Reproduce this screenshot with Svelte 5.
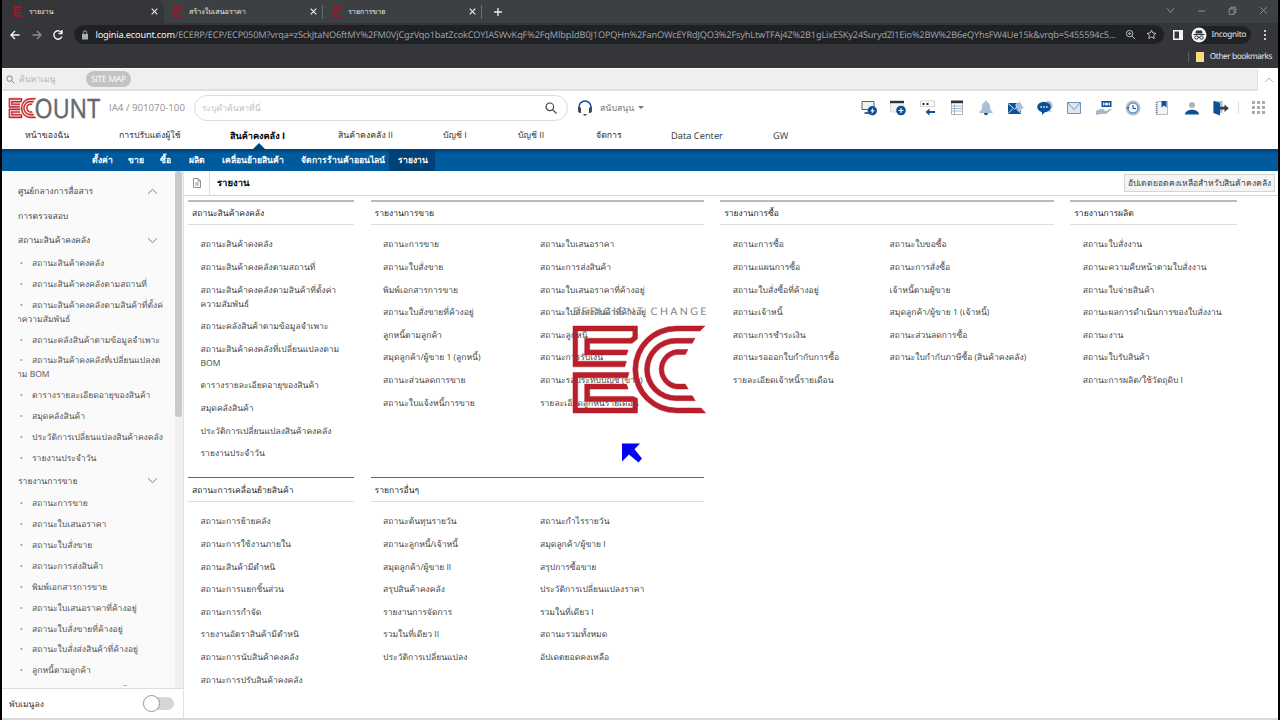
<script lang="ts">
  type Section = { title: string; open?: boolean; chevron?: boolean; items: string[] };
  type Group = { title: string; columns: string[][] };

  const tabs = ['รายงาน', 'สร้างใบเสนอราคา', 'รายการขาย'];

  const mainMenu = [
    'หน้าของฉัน',
    'การปรับแต่งผู้ใช้',
    'สินค้าคงคลัง I',
    'สินค้าคงคลัง II',
    'บัญชี I',
    'บัญชี II',
    'จัดการ',
    'Data Center',
    'GW'
  ];
  const subMenu = ['ตั้งค่า', 'ขาย', 'ซื้อ', 'ผลิต', 'เคลื่อนย้ายสินค้า', 'จัดการร้านค้าออนไลน์', 'รายงาน'];

  const icons = [
    'remote', 'window', 'input', 'list', 'bell', 'compose', 'chat',
    'mail', 'money', 'history', 'book', 'user', 'exit'
  ];

  const sections: Section[] = [
    { title: 'ศูนย์กลางการสื่อสาร', chevron: true, open: false, items: [] },
    { title: 'การตรวจสอบ', items: [] },
    {
      title: 'สถานะสินค้าคงคลัง',
      chevron: true,
      open: true,
      items: [
        'สถานะสินค้าคงคลัง',
        'สถานะสินค้าคงคลังตามสถานที่',
        'สถานะสินค้าคงคลังตามสินค้าที่ตั้งค่\nาความสัมพันธ์',
        'สถานะคลังสินค้าตามข้อมูลจำเพาะ',
        'สถานะสินค้าคงคลังที่เปลี่ยนแปลงต\nาม BOM',
        'ตารางรายละเอียดอายุของสินค้า',
        'สมุดคลังสินค้า',
        'ประวัติการเปลี่ยนแปลงสินค้าคงคลัง',
        'รายงานประจำวัน'
      ]
    },
    {
      title: 'รายงานการขาย',
      chevron: true,
      open: true,
      items: [
        'สถานะการขาย',
        'สถานะใบเสนอราคา',
        'สถานะใบสั่งขาย',
        'สถานะการส่งสินค้า',
        'พิมพ์เอกสารการขาย',
        'สถานะใบเสนอราคาที่ค้างอยู่',
        'สถานะใบสั่งขายที่ค้างอยู่',
        'สถานะใบสั่งส่งสินค้าที่ค้างอยู่',
        'ลูกหนี้ตามลูกค้า',
        'สมุดลูกค้า/ผู้ขาย 1 (ลูกหนี้)'
      ]
    }
  ];

  const topGroups: Group[] = [
    {
      title: 'สถานะสินค้าคงคลัง',
      columns: [[
        'สถานะสินค้าคงคลัง',
        'สถานะสินค้าคงคลังตามสถานที่',
        'สถานะสินค้าคงคลังตามสินค้าที่ตั้งค่า\nความสัมพันธ์',
        'สถานะคลังสินค้าตามข้อมูลจำเพาะ',
        'สถานะสินค้าคงคลังที่เปลี่ยนแปลงตาม\nBOM',
        'ตารางรายละเอียดอายุของสินค้า',
        'สมุดคลังสินค้า',
        'ประวัติการเปลี่ยนแปลงสินค้าคงคลัง',
        'รายงานประจำวัน'
      ]]
    },
    {
      title: 'รายงานการขาย',
      columns: [
        [
          'สถานะการขาย',
          'สถานะใบสั่งขาย',
          'พิมพ์เอกสารการขาย',
          'สถานะใบสั่งขายที่ค้างอยู่',
          'ลูกหนี้ตามลูกค้า',
          'สมุดลูกค้า/ผู้ขาย 1 (ลูกหนี้)',
          'สถานะส่วนลดการขาย',
          'สถานะใบแจ้งหนี้การขาย'
        ],
        [
          'สถานะใบเสนอราคา',
          'สถานะการส่งสินค้า',
          'สถานะใบเสนอราคาที่ค้างอยู่',
          'สถานะใบสั่งส่งสินค้าที่ค้างอยู่',
          'สถานะลูกหนี้',
          'สถานะการรับเงิน',
          'สถานะรอประทับบัญชี (ขาย)',
          'รายละเอียดลูกหนี้รายเดือน'
        ]
      ]
    },
    {
      title: 'รายงานการซื้อ',
      columns: [
        [
          'สถานะการซื้อ',
          'สถานะแผนการซื้อ',
          'สถานะใบสั่งซื้อที่ค้างอยู่',
          'สถานะเจ้าหนี้',
          'สถานะการชำระเงิน',
          'สถานะรอออกใบกำกับการซื้อ',
          'รายละเอียดเจ้าหนี้รายเดือน'
        ],
        [
          'สถานะใบขอซื้อ',
          'สถานะการสั่งซื้อ',
          'เจ้าหนี้ตามผู้ขาย',
          'สมุดลูกค้า/ผู้ขาย 1 (เจ้าหนี้)',
          'สถานะส่วนลดการซื้อ',
          'สถานะใบกำกับภาษีซื้อ (สินค้าคงคลัง)'
        ]
      ]
    },
    {
      title: 'รายงานการผลิต',
      columns: [[
        'สถานะใบสั่งงาน',
        'สถานะความคืบหน้าตามใบสั่งงาน',
        'สถานะใบจ่ายสินค้า',
        'สถานะผลการดำเนินการของใบสั่งงาน',
        'สถานะงาน',
        'สถานะใบรับสินค้า',
        'สถานะการผลิต/ใช้วัตถุดิบ I'
      ]]
    }
  ];

  const bottomGroups: Group[] = [
    {
      title: 'สถานะการเคลื่อนย้ายสินค้า',
      columns: [[
        'สถานะการย้ายคลัง',
        'สถานะการใช้งานภายใน',
        'สถานะสินค้ามีตำหนิ',
        'สถานะการแยกชิ้นส่วน',
        'สถานะการกำจัด',
        'รายงานอัตราสินค้ามีตำหนิ',
        'สถานะการนับสินค้าคงคลัง',
        'สถานะการปรับสินค้าคงคลัง'
      ]]
    },
    {
      title: 'รายการอื่นๆ',
      columns: [
        [
          'สถานะต้นทุนรายวัน',
          'สถานะลูกหนี้/เจ้าหนี้',
          'สมุดลูกค้า/ผู้ขาย II',
          'สรุปสินค้าคงคลัง',
          'รายงานการจัดการ',
          'รวมในที่เดียว II',
          'ประวัติการเปลี่ยนแปลง'
        ],
        [
          'สถานะกำไรรายวัน',
          'สมุดลูกค้า/ผู้ขาย I',
          'สรุปการซื้อขาย',
          'ประวัติการเปลี่ยนแปลงราคา',
          'รวมในที่เดียว I',
          'สถานะรวมทั้งหมด',
          'อัปเดตยอดคงเหลือ'
        ]
      ]
    }
  ];

  let activeSub = $state('รายงาน');
  let folded = $state(false);
</script>

{#snippet ecMark()}
  <path d="M0 0H193V39L177 52H50V72H165L160 87H35V37H172L179 31V15H14V106H160L155 123H0Z" />
  <path d="M0 140H168L163 156H14V247H179V227H35V175H160L165 190H50V212H180L193 218V262H0Z" />
  <path d="M395 0H310A131 131 0 0 0 310 262H397L383 247H310A116 116 0 0 1 310 15H380Z" />
  <path d="M365 37H308A94 94 0 0 0 308 225H366L357 210H308A79 79 0 0 1 308 52H357Z" />
  <path d="M344 71H310A60 60 0 0 0 310 190H345L336 175H310A45 45 0 0 1 310 86H336Z" />
{/snippet}

{#snippet toolIcon(name: string)}
  <svg class="tool" viewBox="0 0 16 16" width="16" height="16">
    {#if name === 'remote'}
      <path d="M1 1.500h12v8H1z" fill="#f2f2f2" stroke="#59636e" />
      <path d="M3.500 12h5v2h-5z" fill="#59636e" />
      <circle cx="11.300" cy="10.800" r="4.700" fill="#0a5297" />
      <path d="M12.300 7.500l-3 4h2l-1 2.800 3.500-4h-2z" fill="#fff" />
    {:else if name === 'window'}
      <path d="M.5 2h13v10H.5z" fill="#f2f2f2" stroke="#ddd" />
      <path d="M0 .8h14v2.400H0z" fill="#333" />
      <circle cx="11" cy="10.500" r="4.800" fill="#0a5297" />
      <path d="M11 8v5M8.500 10.500h5" stroke="#fff" stroke-width="1.200" />
    {:else if name === 'input'}
      <path d="M.5 1h14v5.500H.5z" fill="#fff" stroke="#d3d3d3" />
      <path d="M2.500 3h2v2h-2zM6.500 3h2v2h-2z" fill="#222" />
      <path d="M9.500 8.500L5.500 12l4 3.500v-2.500h5.500v-2H9.500z" fill="#0a5297" />
    {:else if name === 'list'}
      <path d="M2.500 1.500h11v13h-11z" fill="#fff" stroke="#aab3bb" />
      <path d="M2 .5h12v2.700H2z" fill="#333" />
      <path d="M5.500 3v11M3 6h10M3 8.500h10M3 11h10" stroke="#9bb7d0" />
    {:else if name === 'bell'}
      <path d="M8 .5c1 0 1 1 1 1.500 3 .8 3 3.500 3.200 6 .2 2 .8 2.500 2 3.500H1.800c1.200-1 1.800-1.500 2-3.500C4 5.500 4 2.800 7 2c0-.5 0-1.500 1-1.500z" fill="#a9c0d6" />
      <path d="M1.500 11.500h13v1.200h-13z" fill="#789dbf" />
      <path d="M6 13h4c0 3-4 3-4 0z" fill="#0a5297" />
    {:else if name === 'compose'}
      <path d="M0 3h13v11H0z" fill="#0a5297" />
      <path d="M0 3.500l6.500 5.500L13 3.500M0 13.500l5-5M13 13.500l-5-5" stroke="#dbe7f1" fill="none" />
      <path d="M7.500 5L11.500 1l4.500 7-4.500 3.500z" fill="#a9c0d6" stroke="#fff" stroke-width=".6" />
    {:else if name === 'chat'}
      <path d="M10 .8a5 5 0 0 1 3.500 9l1 3-4-2z" fill="#a9c0d6" />
      <ellipse cx="7" cy="7" rx="6.800" ry="5.300" fill="#0a5297" />
      <path d="M5 11v4l4-4z" fill="#0a5297" />
      <path d="M3.500 6.300h1.500v1.500H3.500zM6.300 6.300h1.500v1.500H6.300zM9.100 6.300h1.500v1.500H9.100z" fill="#fff" />
    {:else if name === 'mail'}
      <path d="M1.500 2.500h13v11h-13z" fill="#dbe7f1" stroke="#6f94b8" />
      <path d="M1.500 2.500L8 9.500 14.500 2.500" fill="none" stroke="#6f94b8" />
    {:else if name === 'money'}
      <path d="M5.500 1h10v6h-10z" fill="#0a5297" />
      <path d="M7 2.500h1.500v3H7zM12.500 2.500H14v3h-1.500z" fill="#dbe7f1" />
      <circle cx="10.500" cy="4" r="1.500" fill="#fff" />
      <path d="M0 11l4-2 5 .5-1 1.500h2l5-2.500c1 .5.500 1 0 1.500l-5 4H5l-5 1z" fill="#a9b8c6" />
    {:else if name === 'history'}
      <circle cx="8" cy="8" r="7.400" fill="#a9c0d6" />
      <circle cx="8" cy="8" r="5" fill="#f7fafc" stroke="#4d7ba7" />
      <path d="M8 5v3.500h3" fill="none" stroke="#0a5297" />
      <path d="M1 7h4L3 9.500z" fill="#4d7ba7" />
    {:else if name === 'book'}
      <path d="M3 1.500h10.500v13H3z" fill="#f2f5f8" stroke="#b4bdc5" />
      <path d="M2.500 2v12.500" stroke="#68737e" stroke-width="1.500" stroke-dasharray="1 1" />
      <path d="M7.500 1h5v6.500L10 5.500 7.500 7.500z" fill="#0a5297" />
    {:else if name === 'user'}
      <circle cx="8" cy="5" r="3" fill="#b3b3b3" />
      <path d="M1 14.500c0-6.500 14-6.500 14 0z" fill="#0a5297" />
    {:else if name === 'exit'}
      <path d="M.5 1h9v12h-9z" fill="#a9c0d6" />
      <path d="M.5 1L7 3v12.500L.5 13z" fill="#0a5297" />
      <path d="M7 6.800h4.500V4.500l4.300 3.700-4.300 3.700V9.600H7z" fill="#3d3d3d" />
    {/if}
  </svg>
{/snippet}

{#snippet group(g: Group)}
  <section class="group">
    <h2>{g.title}</h2>
    <div class="group-body">
      {#each g.columns as column}
        <ul>
          {#each column as item}
            <li>{item}</li>
          {/each}
        </ul>
      {/each}
    </div>
  </section>
{/snippet}

<div class="screen">
  <header class="browser">
    <div class="tabs">
      {#each tabs as tab, i}
        <div class="tab" class:current={i === 0}>
          <svg class="favicon" viewBox="0 0 193 262"><path d="M0 0H193V50H50V80H170V125H50V150H170V190H50V215H193V262H0Z" /></svg>
          <span>{tab}</span>
          <svg class="x" viewBox="0 0 8 8"><path d="M1.500 1.500l5 5M6.500 1.500l-5 5" /></svg>
        </div>
      {/each}
      <svg class="plus" viewBox="0 0 10 10"><path d="M5 1v8M1 5h8" /></svg>
      <div class="window-buttons">
        <svg viewBox="0 0 10 10"><path d="M2 3l3 4 3-4" /></svg>
        <svg viewBox="0 0 10 10"><path d="M2 5.500h6" /></svg>
        <svg viewBox="0 0 10 10"><path d="M2 3.500h4.500v5H2zM3.500 3.500V2H8v5H6.500" /></svg>
        <svg viewBox="0 0 10 10"><path d="M2 2l6 6M8 2L2 8" /></svg>
      </div>
    </div>
    <div class="toolbar">
      <svg class="nav-icon" viewBox="0 0 12 12"><path d="M10.500 6H2M6 2L2 6l4 4" /></svg>
      <svg class="nav-icon dim" viewBox="0 0 12 12"><path d="M1.500 6H10M6 2l4 4-4 4" /></svg>
      <svg class="nav-icon" viewBox="0 0 12 12"><path d="M9.800 4A4.200 4.200 0 1 0 10 7.500M10 1v3.500H6.500" /></svg>
      <div class="address">
        <svg class="lock" viewBox="0 0 8 10"><path d="M1 4h6v5.500H1z" fill="#aaadb1" /><path d="M2.300 4V2.500a1.700 1.700 0 0 1 3.400 0V4" fill="none" stroke="#aaadb1" /></svg>
        <span class="url"><b>loginia.ecount.com</b>/ECERP/ECP/ECP050M?vrqa=zSckJtaNO6ftMY%2FM0VjCgzVqo1batZcokCOYIASWvKqF%2FqMlbpIdB0J1OPQHn%2FanOWcEYRdJQO3%2FsyhLtwTFAj4Z%2B1gLixESKy24SurydZl1Eio%2BW%2B6eQYhsFW4Ue15k&vrqb=5455594c5...</span>
        <svg class="bar-icon" viewBox="0 0 12 12"><circle cx="5" cy="5" r="3.500" /><path d="M7.700 7.700L11 11M3.500 5h3M5 3.500v3" /></svg>
        <svg class="bar-icon" viewBox="0 0 12 12"><path d="M6 1.200l1.400 3.100 3.400.4-2.500 2.300.7 3.400L6 8.700 3 10.400l.7-3.400L1.200 4.700l3.400-.4z" /></svg>
      </div>
      <svg class="panel" viewBox="0 0 10 10"><path d="M0 0h10v10H0zM1.500 1.500v7H6v-7z" fill="#f1f3f4" fill-rule="evenodd" /></svg>
      <div class="incognito">
        <svg viewBox="0 0 16 16">
          <circle cx="8" cy="8" r="7.500" fill="#f1f3f4" />
          <path d="M5.200 3.500h5.600l.8 3H4.400zM2.500 7h11v1h-11z" fill="#303134" />
          <circle cx="5.500" cy="10.500" r="1.700" fill="none" stroke="#303134" /><circle cx="10.500" cy="10.500" r="1.700" fill="none" stroke="#303134" /><path d="M7 10.300h2" stroke="#303134" />
        </svg>
        <span>Incognito</span>
      </div>
      <svg class="dots" viewBox="0 0 4 12"><circle cx="2" cy="2" r="1.100" /><circle cx="2" cy="6" r="1.100" /><circle cx="2" cy="10" r="1.100" /></svg>
    </div>
    <div class="bookmarks"><i></i>Other bookmarks</div>
  </header>

  <div class="quickbar">
    <div class="quick-inner">
      <svg class="small-search" viewBox="0 0 10 10"><circle cx="4" cy="4" r="3" /><path d="M6.300 6.300L9.300 9.300" /></svg>
      <span class="placeholder">ค้นหาเมนู</span>
      <span class="sitemap">SITE MAP</span>
    </div>
    <svg class="collapse" viewBox="0 0 10 6"><path d="M1 5l4-4 4 4" /></svg>
  </div>

  <div class="brandbar">
    <svg class="brand" viewBox="0 0 92 22" width="92" height="22">
      <text x="26.500" y="21" textLength="65.500" lengthAdjust="spacingAndGlyphs">OUNT</text>
      <g class="brand-mark" transform="translate(0.900 1.300) scale(0.068 0.075)">{@render ecMark()}</g>
    </svg>
    <span class="company">IA4 / 901070-100</span>
    <div class="search">
      <span>ระบุคำค้นหาที่นี่</span>
      <svg viewBox="0 0 12 12"><circle cx="4.800" cy="4.800" r="3.800" /><path d="M7.600 7.600L11.500 11.500" /></svg>
    </div>
    <svg class="headset" viewBox="0 0 16 16">
      <path d="M2 9V7a6 6 0 0 1 12 0v2" fill="none" stroke="#0a5297" stroke-width="1.600" />
      <path d="M1 7.500h3v5.500H2.500L1 11.500zM12 7.500h3V11.500L13.500 13H12zM6.500 14h3v1.500h-3z" fill="#414b55" />
    </svg>
    <span class="support">สนับสนุน</span>
    <i class="caret"></i>
    <div class="tools">
      {#each icons as icon}
        {@render toolIcon(icon)}
      {/each}
    </div>
    <div class="apps">
      {#each Array(9) as _}<i></i>{/each}
    </div>
  </div>

  <nav class="main-menu">
    {#each mainMenu as entry, i}
      <span class:active={i === 2} class:latin={i > 6}>{entry}</span>
    {/each}
  </nav>

  <nav class="sub-menu">
    {#each subMenu as entry}
      <button class:active={entry === activeSub} onclick={() => (activeSub = entry)}>{entry}</button>
    {/each}
  </nav>

  <div class="body">
    <aside>
      <div class="tree-wrap">
        <div class="tree">
          {#each sections as section}
            <div class="section-title">
              <span>{section.title}</span>
              {#if section.chevron}
                <svg class:open={section.open} viewBox="0 0 10 6"><path d="M1 5l4-4 4 4" /></svg>
              {/if}
            </div>
            {#if section.items.length}
              <ul>
                {#each section.items as item}
                  <li>{item}</li>
                {/each}
              </ul>
            {/if}
          {/each}
        </div>
        <div class="scrollbar"><i></i></div>
      </div>
      <div class="fold">
        <span>พับเมนูลง</span>
        <button class="switch" class:on={folded} aria-label="fold menu" onclick={() => (folded = !folded)}></button>
      </div>
    </aside>

    <main>
      <div class="page-title">
        <div class="doc">
          <svg viewBox="0 0 8 10"><path d="M.5.500h4.500l2.500 2.500v6.500h-7zM5 .5V3h2.500M2 5h4M2 7h4" /></svg>
        </div>
        <h1>รายงาน</h1>
        <button class="update">อัปเดตยอดคงเหลือสำหรับสินค้าคงคลัง</button>
      </div>
      <div class="groups first">
        {#each topGroups as g}{@render group(g)}{/each}
      </div>
      <div class="groups second">
        {#each bottomGroups as g}{@render group(g)}{/each}
      </div>

      <!-- loading mark that floats over the report list -->
      <div class="loading">
        <span>EFFICIENT CHANGE</span>
        <svg viewBox="0 0 398 262" width="133" height="87" preserveAspectRatio="none">{@render ecMark()}</svg>
      </div>
      <svg class="pointer" viewBox="0 0 20 20"><path d="M0 0.500H18L12.500 6.300 20 15.500 16.500 19.500 7 11.500 0 18.500Z" /></svg>
    </main>
  </div>
</div>

<style>
  :global(body) {
    background: #000;
    overflow: hidden;
  }

  .screen {
    display: flex;
    flex-direction: column;
    box-sizing: border-box;
    width: 1280px;
    height: 720px;
    border: solid #000;
    border-width: 0 2px;
    background: #fff;
    color: #444;
    font: 8.55px/14px "Open Sans", "Noto Sans", sans-serif;
    text-rendering: geometricPrecision;
    white-space: nowrap;
    overflow: hidden;
  }

  .screen :global(*) {
    box-sizing: border-box;
  }

  ul, h1, h2 {
    margin: 0;
    padding: 0;
    list-style: none;
    font-weight: 400;
  }

  button {
    border: 0;
    padding: 0;
    background: none;
    color: inherit;
    font: inherit;
    letter-spacing: inherit;
  }

  /* browser chrome */
  .browser {
    flex: none;
    height: 68px;
    background: #35363a;
    color: #e8eaed;
    font-family: "Noto Sans", sans-serif;
  }

  .tabs {
    display: flex;
    align-items: center;
    height: 23px;
    background: #3d4043;
  }

  .tab {
    display: flex;
    align-items: center;
    width: 159px;
    height: 23px;
    padding: 0 5px 0 12px;
    font-size: 7.2px;
  }

  .tab + .tab {
    padding-left: 10px;
    background: linear-gradient(#6a6d70, #6a6d70) right center / 1px 14px no-repeat;
  }

  .tab.current {
    width: 162px;
    background: #35363a;
    border-radius: 0 6px 0 0;
  }

  .favicon {
    width: 8px;
    height: 11px;
    margin-right: 7px;
    fill: #8f1d2c;
  }

  .x {
    width: 9px;
    height: 9px;
    margin-left: auto;
    fill: none;
    stroke: #e8eaed;
  }

  .plus {
    width: 10px;
    height: 10px;
    margin-left: 11px;
    fill: none;
    stroke: #e8eaed;
    stroke-width: 1.3;
  }

  .window-buttons {
    display: flex;
    gap: 20px;
    margin: -3px 9px 0 auto;
  }

  .window-buttons svg {
    width: 11px;
    height: 11px;
    fill: none;
    stroke: #9a9da1;
    stroke-width: .8;
  }

  .toolbar {
    display: flex;
    align-items: center;
    height: 23px;
    padding-left: 7px;
  }

  .nav-icon {
    flex: none;
    width: 12px;
    height: 12px;
    margin-right: 9.5px;
    fill: none;
    stroke: #f1f3f4;
    stroke-width: 1.4;
  }

  .nav-icon.dim {
    stroke: #8b8d91;
  }

  .address {
    display: flex;
    flex: none;
    align-items: center;
    width: 1090px;
    height: 19px;
    padding: 0 5px 0 7px;
    border-radius: 10px;
    background: #202124;
  }

  .lock {
    flex: none;
    width: 8px;
    height: 10px;
    margin-right: 7px;
  }

  .url {
    flex: none;
    width: 1026px;
    color: #9aa0a6;
    font-size: 9.2px;
    letter-spacing: -.17px;
  }

  .url b {
    color: #f1f3f4;
    font-weight: 400;
  }

  .bar-icon {
    flex: none;
    width: 11px;
    height: 11px;
    margin-left: 3px;
    fill: none;
    stroke: #c6c9cd;
  }

  .bar-icon + .bar-icon {
    margin-left: 10px;
  }

  .panel {
    flex: none;
    width: 10px;
    height: 10px;
    margin-left: 9px;
  }

  .incognito {
    display: flex;
    flex: none;
    align-items: center;
    gap: 5px;
    width: 60px;
    height: 18px;
    margin-left: 8px;
    border-radius: 9px;
    background: #202124;
    font-size: 8.2px;
    letter-spacing: -.25px;
  }

  .incognito svg {
    flex: none;
    width: 16px;
    height: 16px;
  }

  .dots {
    width: 4px;
    height: 12px;
    margin-left: 12px;
    fill: #f1f3f4;
  }

  .bookmarks {
    display: flex;
    align-items: center;
    justify-content: flex-end;
    height: 21px;
    padding-right: 6px;
    font-size: 8.3px;
    letter-spacing: -.43px;
  }

  .bookmarks i {
    width: 16px;
    height: 10px;
    margin-right: 6px;
    border-left: 1px solid #5d5f63;
    background: linear-gradient(#f8da80, #f8da80) right / 8px 10px no-repeat;
  }

  /* page header */
  .quickbar {
    display: flex;
    flex: none;
    align-items: center;
    height: 23px;
    border-top: 1px solid #fff;
  }

  .quick-inner {
    display: flex;
    align-items: center;
    width: 1256px;
    height: 22px;
    padding-left: 4px;
    border: solid #e0e0e0;
    border-width: 0 1px 2px 0;
    background: #efefef;
  }

  .small-search {
    width: 9px;
    height: 9px;
    fill: none;
    stroke: #777;
  }

  .placeholder {
    width: 71px;
    padding-left: 4px;
    color: #b4b4b4;
  }

  .sitemap {
    width: 45px;
    height: 16px;
    border-radius: 8px;
    background: #c3c3c3;
    color: #fff;
    font-size: 8.6px;
    line-height: 16px;
    letter-spacing: -.3px;
    text-align: center;
  }

  .collapse {
    width: 10px;
    height: 6px;
    margin-left: 6px;
    fill: none;
    stroke: #999;
    stroke-width: .8;
  }

  .brandbar {
    display: flex;
    flex: none;
    align-items: center;
    height: 33px;
    padding-left: 6px;
  }

  .brand {
    overflow: visible;
  }

  .brand text {
    fill: #66686b;
    stroke: #66686b;
    stroke-width: .5;
    font: 26.5px "Open Sans", sans-serif;
  }

  .brand-mark {
    fill: #c4222d;
    stroke: #c4222d;
    stroke-width: 7;
  }

  .company {
    width: 85px;
    margin-left: 9px;
    color: #929292;
    font-size: 9.7px;
  }

  .search {
    display: flex;
    align-items: center;
    justify-content: space-between;
    width: 374px;
    height: 26px;
    padding: 0 10px 0 7px;
    border: 1px solid #dcdcdc;
    border-radius: 13px;
    color: #bdbdbd;
  }

  .search svg {
    width: 12px;
    height: 12px;
    fill: none;
    stroke: #444;
    stroke-width: 1.2;
  }

  .headset {
    width: 16px;
    height: 16px;
    margin-left: 9px;
  }

  .support {
    width: 38px;
    margin-left: 7px;
    color: #777;
    font-size: 8.8px;
  }

  .caret {
    border: solid transparent;
    border-width: 3px 3px 0;
    border-top-color: #777;
  }

  .tools {
    display: flex;
    gap: 13.35px;
    margin-left: 217px;
  }

  .apps {
    display: grid;
    grid-template-columns: repeat(3, 3px);
    gap: 2px;
    margin-left: 9px;
    padding-left: 13px;
    border-left: 1px solid #ddd;
  }

  .apps i {
    height: 3px;
    background: #aaa;
  }

  .main-menu {
    display: grid;
    flex: none;
    grid-template-columns: 94px 111px 108px 105px 75px 78px 75px 102px 60px;
    height: 25px;
    padding-left: 23px;
    color: #333;
    font-size: 8.75px;
    line-height: 23px;
  }

  .main-menu .latin {
    font-size: 9.3px;
  }

  .main-menu .active {
    position: relative;
    color: #000;
    font-size: 9.1px;
    font-weight: 700;
  }

  .main-menu .active::after {
    content: '';
    position: absolute;
    left: 23px;
    bottom: 0;
    border: solid transparent;
    border-width: 0 6px 6px;
    border-bottom-color: #00457c;
  }

  .sub-menu {
    display: grid;
    flex: none;
    grid-template-columns: 36px 32px 29px 33px 79px 88px 46px;
    height: 22px;
    padding-left: 90px;
    background: linear-gradient(#00416f, #005a9e 5px);
    color: #fff;
    font-weight: 600;
  }

  .sub-menu button {
    text-align: left;
  }

  .sub-menu .active {
    padding-left: 9px;
    background: #004277;
  }

  .body {
    display: flex;
    flex: 1;
    min-height: 0;
    border-bottom: 2px solid #d9d9d9;
  }

  /* side tree */
  aside {
    display: flex;
    flex-direction: column;
    width: 182px;
    border-right: 1px solid #e2e2e2;
  }

  .tree-wrap {
    display: flex;
    height: 517px;
    background: #fafafa;
  }

  .tree {
    width: 173px;
    height: 515px;
    padding-top: 8px;
    overflow: hidden;
  }

  .section-title {
    display: flex;
    align-items: center;
    justify-content: space-between;
    height: 24.5px;
    padding: 0 17px 0 16px;
  }

  .section-title svg {
    width: 11px;
    height: 7px;
    fill: none;
    stroke: #5a8096;
    stroke-width: .9;
  }

  .section-title svg.open {
    transform: scaleY(-1);
  }

  .tree li {
    padding: 3.45px 0 3.45px 15px;
    color: #505050;
    white-space: pre;
  }

  .tree li::before {
    content: '·';
    display: inline-block;
    width: 12px;
    padding-left: 3px;
    font-weight: 700;
  }

  .scrollbar {
    width: 8px;
    background: #f0f0f0;
  }

  .scrollbar i {
    display: block;
    width: 7px;
    height: 246px;
    border-radius: 4px;
    background: #c9c9c9;
  }

  .fold {
    display: flex;
    align-items: center;
    justify-content: space-between;
    flex: 1;
    padding: 0 9px 0 7px;
    border-top: 1px solid #ddd;
    color: #333;
  }

  .switch {
    width: 31px;
    height: 13px;
    border-radius: 7px;
    background: #d6d6d6;
  }

  .switch::before {
    content: '';
    display: block;
    box-sizing: border-box;
    width: 17px;
    height: 17px;
    margin: -2px 0;
    border: 1px solid #999;
    border-radius: 50%;
    background: #fff;
  }

  .switch.on::before {
    margin-left: 13px;
  }

  /* report list */
  main {
    position: relative;
    flex: 1;
  }

  .page-title {
    display: flex;
    align-items: center;
    height: 25px;
    padding-right: 3px;
    border-bottom: 1px solid #d4d4d4;
  }

  .doc {
    display: flex;
    align-items: center;
    width: 26px;
    height: 24px;
    padding-left: 9px;
    border-right: 1px solid #ddd;
  }

  .doc svg {
    width: 8px;
    height: 10px;
    fill: none;
    stroke: #777;
    stroke-width: .8;
  }

  h1 {
    margin-left: 7px;
    color: #000;
    font-size: 9.5px;
    font-weight: 700;
  }

  .update {
    height: 18px;
    margin-left: auto;
    padding: 0 3px;
    border: 1px solid #d5d5d5;
    background: #f4f4f4;
  }

  .groups {
    display: grid;
    grid-template-columns: 166px 333px 333.5px 167px;
    column-gap: 16.6px;
    padding: 4px 0 0 4px;
  }

  .groups.first {
    height: 281px;
  }

  .groups.second {
    padding-top: 0;
  }

  h2 {
    height: 25px;
    padding-left: 4px;
    border-top: 2px solid #bbb;
    border-bottom: 1px solid #ddd;
    color: #222;
    font-size: 8.55px;
    line-height: 22px;
  }

  .second h2 {
    border-top: 1px solid #666;
    line-height: 24px;
  }

  .group-body {
    display: flex;
    padding: 8px 0 0 12.5px;
  }

  .group ul {
    width: 156.9px;
  }

  .group li {
    padding: 4.32px 0;
    line-height: 14px;
    white-space: pre;
  }

  .loading {
    position: absolute;
    top: 134px;
    left: 389px;
    width: 140px;
  }

  .loading span {
    display: block;
    height: 21px;
    color: #858585;
    font: 10.5px/14px Lato, sans-serif;
    letter-spacing: 2.4px;
  }

  .loading svg {
    display: block;
    fill: #b81f2b;
    stroke: #b81f2b;
    stroke-width: 1.5;
    overflow: visible;
  }

  .pointer {
    position: absolute;
    top: 272px;
    left: 438px;
    width: 20px;
    height: 20px;
    fill: #0000f5;
  }
</style>
